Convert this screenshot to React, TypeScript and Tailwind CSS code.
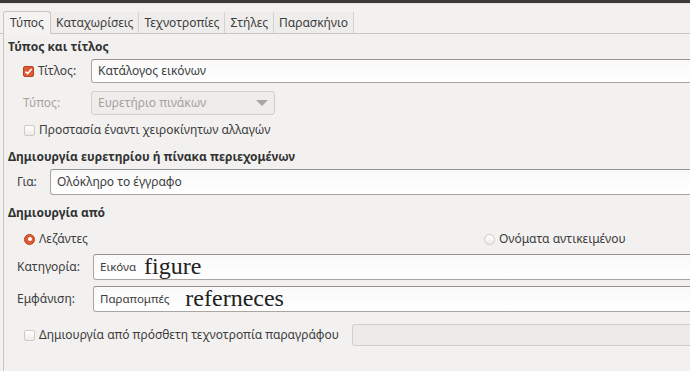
import React from 'react';

const font = { fontFamily: '"Noto Sans", "Open Sans", sans-serif' };
const serif = { fontFamily: '"Liberation Serif", "DejaVu Serif", serif' };

const tabs = ['Τύπος', 'Καταχωρίσεις', 'Τεχνοτροπίες', 'Στήλες', 'Παρασκήνιο'];

const Check: React.FC<{ checked?: boolean }> = ({ checked }) =>
  checked ? (
    <span className="flex h-[11px] w-[11px] items-center justify-center rounded-[2px] bg-[#dc5a34] border border-[#b8431c]">
      <svg width="9" height="9" viewBox="0 0 9 9">
        <path d="M1.5 4.6 L3.6 6.6 L7.6 2" fill="none" stroke="#ffffff" strokeWidth="1.6" />
      </svg>
    </span>
  ) : (
    <span className="h-[11px] w-[11px] rounded-[2px] border border-[#cdc9c4] bg-gradient-to-b from-[#ffffff] to-[#ecebe9]" />
  );

const Radio: React.FC<{ on?: boolean }> = ({ on }) =>
  on ? (
    <span className="flex h-[11px] w-[11px] items-center justify-center rounded-full bg-[#dc5a34] border border-[#b8431c]">
      <span className="h-[4px] w-[4px] rounded-full bg-white" />
    </span>
  ) : (
    <span className="h-[11px] w-[11px] rounded-full border border-[#cdc9c4] bg-gradient-to-b from-[#ffffff] to-[#ecebe9]" />
  );

const Field: React.FC<{ children?: React.ReactNode; className?: string }> = ({ children, className }) => (
  <div className={`flex items-center rounded-[3px] border border-[#aaa69f] border-t-[#97938c] bg-gradient-to-b from-[#f9f9f9] to-[#ffffff] px-[6px] text-[#3c3c3c] ${className ?? ''}`}>
    {children}
  </div>
);

export default function App() {
  return (
    <div className="w-[690px] h-[371px] overflow-hidden bg-[#f2f1f0] text-[12px] text-[#3c3c3c]" style={font}>
      <div className="h-[3px] bg-[#3c3b37]" />
      <div className="h-[1px] bg-[#e6e4e1]" />
      {/* tab strip */}
      <div className="flex items-end h-[30px] pl-[3px] border-b border-[#c9c6c1]">
        <div className="h-[23px] px-[6px] flex items-center bg-[#f4f3f2] border border-b-0 border-[#c9c6c1] rounded-t-[3px] -mb-[1px] relative">
          {tabs[0]}
        </div>
        {tabs.slice(1).map(t => (
          <div key={t} className="h-[21px] px-[5px] flex items-center border-r border-[#d6d3cf] bg-[#eeedeb]">
            {t}
          </div>
        ))}
      </div>

      {/* panel */}
      <div className="ml-[3px] border-l border-[#c9c6c1] w-[740px] h-[340px] flex flex-col">
        <div className="mt-[5px] h-[16px] pl-[4px] flex items-center font-bold text-[#333]">Τύπος και τίτλος</div>

        <div className="mt-[4px] h-[24px] flex items-center">
          <div className="w-[87px] pl-[19px] flex items-center gap-[4px]">
            <Check checked />
            <span>Τίτλος:</span>
          </div>
          <Field className="flex-1 h-[24px]">Κατάλογος εικόνων</Field>
        </div>

        <div className="mt-[8px] h-[24px] flex items-center">
          <div className="w-[87px] pl-[19px] text-[#a5a29d]">Τύπος:</div>
          <div className="w-[184px] h-[24px] flex items-center justify-between rounded-[3px] border border-[#d2cec8] bg-[#eeedeb] px-[6px] text-[#a5a29d]">
            <span>Ευρετήριο πινάκων</span>
            <svg width="12" height="7" viewBox="0 0 12 7">
              <path d="M0 0 H12 L6 6 Z" fill="#a9a6a1" />
            </svg>
          </div>
        </div>

        <div className="mt-[7px] h-[16px] pl-[20px] flex items-center gap-[4px]">
          <Check />
          <span>Προστασία έναντι χειροκίνητων αλλαγών</span>
        </div>

        <div className="mt-[11px] h-[16px] pl-[4px] flex items-center font-bold text-[#333]">
          Δημιουργία ευρετηρίου ή πίνακα περιεχομένων
        </div>

        <div className="mt-[4px] h-[26px] flex items-center">
          <div className="w-[46px] pl-[13px]">Για:</div>
          <Field className="flex-1 h-[26px]">Ολόκληρο το έγγραφο</Field>
        </div>

        <div className="mt-[10px] h-[16px] pl-[4px] flex items-center font-bold text-[#333]">Δημιουργία από</div>

        <div className="mt-[10px] h-[16px] pl-[20px] flex items-center">
          <div className="flex items-center gap-[4px] w-[460px]">
            <Radio on />
            <span>Λεζάντες</span>
          </div>
          <div className="flex items-center gap-[4px]">
            <Radio />
            <span>Ονόματα αντικειμένου</span>
          </div>
        </div>

        <div className="mt-[7px] h-[26px] flex items-center">
          <div className="w-[89px] pl-[13px]">Κατηγορία:</div>
          <Field className="flex-1 h-[26px] gap-[8px]">
            <span className="text-[11.5px]">Εικόνα</span>
            <span className="text-[24px] leading-none text-[#222] -mt-[3px]" style={serif}>figure</span>
          </Field>
        </div>

        <div className="mt-[6px] h-[26px] flex items-center">
          <div className="w-[89px] pl-[13px]">Εμφάνιση:</div>
          <Field className="flex-1 h-[26px] gap-[16px]">
            <span className="text-[11.5px]">Παραπομπές</span>
            <span className="text-[24px] leading-none text-[#222] -mt-[3px]" style={serif}>referneces</span>
          </Field>
        </div>

        <div className="mt-[12px] h-[22px] flex items-center">
          <div className="w-[348px] pl-[20px] flex items-center gap-[4px]">
            <Check />
            <span>Δημιουργία από πρόσθετη τεχνοτροπία παραγράφου</span>
          </div>
          <div className="flex-1 h-[22px] rounded-[3px] border border-[#d2cec8] bg-[#ecebe9]" />
        </div>
      </div>
    </div>
  );
}
